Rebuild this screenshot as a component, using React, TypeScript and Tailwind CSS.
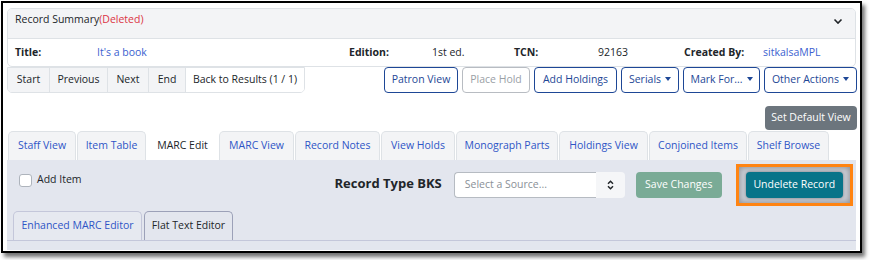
import React from "react";

const navBtns = [
  { label: "Start", w: "w-[42px]" },
  { label: "Previous", w: "w-[58px]" },
  { label: "Next", w: "w-[41px]" },
  { label: "End", w: "w-[37px]" },
];

const actions = [
  { label: "Patron View", w: "w-[74px]" },
  { label: "Place Hold", w: "w-[68px]", disabled: true },
  { label: "Add Holdings", w: "w-[83px]" },
  { label: "Serials", w: "w-[58px]", caret: true },
  { label: "Mark For...", w: "w-[77px]", caret: true },
  { label: "Other Actions", w: "w-[93px]", caret: true },
];

const tabs = [
  { label: "Staff View", w: "w-[68px]" },
  { label: "Item Table", w: "w-[69px]" },
  { label: "MARC Edit", w: "w-[71px]", active: true },
  { label: "MARC View", w: "w-[75px]" },
  { label: "Record Notes", w: "w-[85px]" },
  { label: "View Holds", w: "w-[74px]" },
  { label: "Monograph Parts", w: "w-[102px]" },
  { label: "Holdings View", w: "w-[89px]" },
  { label: "Conjoined Items", w: "w-[98px]" },
  { label: "Shelf Browse", w: "w-[81px]" },
];

const Caret = () => (
  <span className="ml-[4px] inline-block w-0 h-0 border-x-[3.5px] border-x-transparent border-t-[4px] border-t-[#1e4796] translate-y-[-1px]" />
);

const Field = ({ label, value, link, w }: { label: string; value: string; link?: boolean; w: string }) => (
  <div className="flex items-center whitespace-nowrap">
    <span className={`font-bold text-[#212529] shrink-0 ${w}`}>{label}</span>
    <span className={link ? "text-[#3b5fd0]" : "text-[#212529]"}>{value}</span>
  </div>
);

const App = () => {
  return (
    <div
      className="w-[870px] h-[260px] bg-white text-[10.5px] text-[#212529] overflow-hidden whitespace-nowrap"
      style={{ fontFamily: '"Open Sans", "Noto Sans", sans-serif' }}
    >
      <div className="ml-[1px] mt-[1px] w-[861px] h-[252px] border-2 border-black shadow-[3px_4px_4px_rgba(0,0,0,0.55)] pl-[4px] pt-[5px]">
        {/* summary card */}
        <div className="w-[849px] border border-[#dee2e6] rounded-[5px] overflow-hidden">
          <div className="h-[30px] bg-[#f3f4f6] border-b border-[#dee2e6] flex items-start justify-between pl-[7px] pr-[12px] pt-[3px]">
            <span>
              Record Summary<span className="text-[#dc3545]">(Deleted)</span>
            </span>
            <svg width="10" height="7" viewBox="0 0 10 7" className="mt-[6px]">
              <path d="M1.5 1.5 L5 5 L8.5 1.5" fill="none" stroke="#212529" strokeWidth="1.6" />
            </svg>
          </div>
          <div className="h-[27px] flex items-center pl-[7px]">
            <div className="w-[334px] shrink-0">
              <Field label="Title:" value="It's a book" link w="w-[82px]" />
            </div>
            <div className="w-[165px] shrink-0">
              <Field label="Edition:" value="1st ed." w="w-[83px]" />
            </div>
            <div className="w-[170px] shrink-0">
              <Field label="TCN:" value="92163" w="w-[84px]" />
            </div>
            <Field label="Created By:" value="sitkalsaMPL" link w="w-[79px]" />
          </div>
        </div>

        {/* nav + actions */}
        <div className="flex w-[850px] h-[26px]">
          <div className="flex border border-[#dee2e6] rounded-b-[5px] overflow-hidden">
            {navBtns.map((b) => (
              <div
                key={b.label}
                className={`${b.w} flex items-center justify-center bg-[#f3f4f6] border-r border-[#dee2e6]`}
              >
                {b.label}
              </div>
            ))}
            <div className="w-[118px] flex items-center justify-center bg-white">Back to Results (1 / 1)</div>
          </div>
          <div className="flex gap-[4px] ml-auto">
            {actions.map((a) => (
              <div
                key={a.label}
                className={`${a.w} h-[26px] rounded-[4px] border flex items-center justify-center ${
                  a.disabled
                    ? "border-[#b8bcc2] text-[#9aa0a6]"
                    : "border-[#1e4796] text-[#1e4796]"
                }`}
              >
                {a.label}
                {a.caret && <Caret />}
              </div>
            ))}
          </div>
        </div>

        <div className="flex justify-end w-[850px] mt-[13px]">
          <div className="w-[92px] h-[24px] rounded-[4px] bg-[#6c757d] text-white flex items-center justify-center">
            Set Default View
          </div>
        </div>

        {/* tabs */}
        <div className="flex gap-[1px] pl-[1px] mt-[1px] h-[29px] items-end">
          {tabs.map((t) => (
            <div
              key={t.label}
              className={`${t.w} h-[29px] shrink-0 rounded-t-[5px] border border-b-0 flex items-center justify-center ${
                t.active
                  ? "bg-white border-white text-[#212529]"
                  : "bg-[#f3f4f6] border-[#dee2e6] text-[#2e55c6]"
              }`}
            >
              {t.label}
            </div>
          ))}
        </div>

        {/* panel */}
        <div className="w-[849px] h-[90px] bg-[#e3e6ee] flex flex-col">
          <div className="flex h-[51px] items-start">
            <label className="flex items-center gap-[5px] ml-[12px] mt-[13px] shrink-0">
              <span className="w-[13px] h-[13px] rounded-[3px] bg-white border border-[#aeb4bc]" />
              <span className="translate-y-[-1px]">Add Item</span>
            </label>
            <span className="ml-[253px] mt-[14px] text-[13px] font-bold text-[#212529] shrink-0">Record Type BKS</span>
            <div className="ml-[12px] mt-[12px] flex h-[26px] w-[171px] shrink-0">
              <div className="flex-1 bg-white border border-r-0 border-[#b6bbc2] rounded-l-[4px] flex items-center pl-[10px] text-[#8a9097]">
                Select a Source...
              </div>
              <div className="w-[29px] bg-[#f5f6f8] rounded-r-[4px] flex items-center justify-center">
                <svg width="7" height="10" viewBox="0 0 7 10">
                  <path d="M1 3.8 L3.5 1.3 L6 3.8 M1 6.2 L3.5 8.7 L6 6.2" fill="none" stroke="#212529" strokeWidth="1.5" />
                </svg>
              </div>
            </div>
            <div className="ml-[11px] mt-[12px] w-[86px] h-[26px] shrink-0 rounded-[4px] bg-[#7aab96] text-white flex items-center justify-center">
              Save Changes
            </div>
            <div className="ml-[14px] mt-[4px] w-[117px] h-[42px] shrink-0 border-[3px] border-[#ff8412] flex items-center justify-center bg-[#c9ccd4] shadow-[inset_0_0_6px_rgba(0,0,0,0.35)]">
              <div className="w-[97px] h-[26px] rounded-[4px] bg-[#087489] text-white flex items-center justify-center shadow-[0_0_3px_rgba(0,0,0,0.4)]">
                Undelete Record
              </div>
            </div>
          </div>
          <div className="flex gap-[2px] pl-[6px] border-b border-[#c4c7da]">
            <div className="w-[129px] h-[29px] rounded-t-[5px] border border-b-0 border-[#c4c7da] bg-[#e6e9f0] flex items-center justify-center text-[#2e55c6]">
              Enhanced MARC Editor
            </div>
            <div className="w-[89px] h-[29px] rounded-t-[5px] border border-b-0 border-[#9ca1b8] bg-[#e3e6ee] flex items-center justify-center text-[#212529]">
              Flat Text Editor
            </div>
          </div>
        </div>
      </div>
    </div>
  );
};

export default App;
